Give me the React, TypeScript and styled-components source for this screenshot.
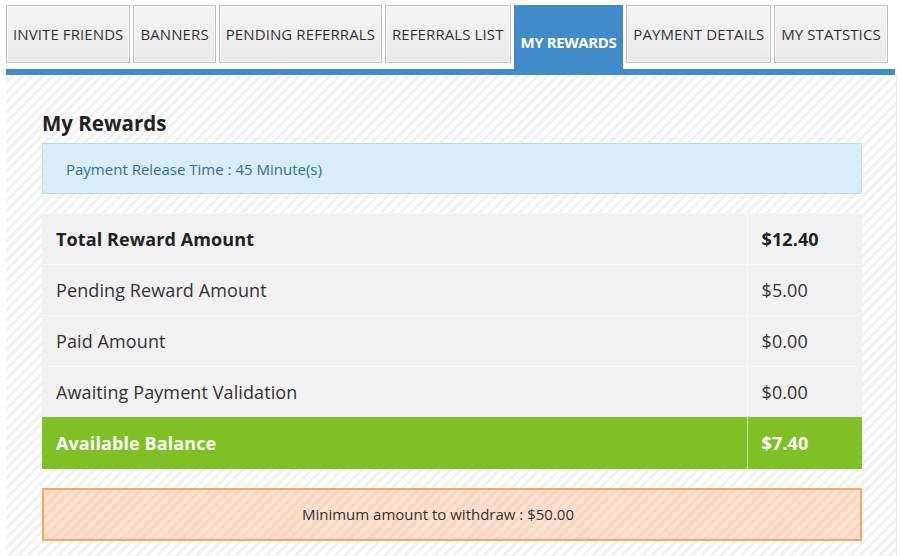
import * as React from 'react';
import styled, { createGlobalStyle } from 'styled-components';

const GlobalStyle = createGlobalStyle`
    body {
        margin: 0;
        background: #ffffff;
        font-family: "Open Sans", "Liberation Sans", sans-serif;
        color: #333333;
    }
`;

const Page = styled.div`
    width: 902px;
    height: 556px;
    padding: 5px 0 0 6px;
    box-sizing: border-box;
    overflow: hidden;
`;

const TabBar = styled.div`
    display: flex;
    align-items: flex-start;
    gap: 3px;
    height: 64px;
`;

const Tab = styled.div<{ $active?: boolean }>`
    box-sizing: border-box;
    height: ${p => (p.$active ? '64px' : '58px')};
    padding: ${p => (p.$active ? '27px 6px 0' : '0 6px')};
    display: flex;
    align-items: ${p => (p.$active ? 'flex-start' : 'center')};
    font-size: 15px;
    line-height: 19px;
    font-weight: ${p => (p.$active ? 700 : 400)};
    letter-spacing: ${p => (p.$active ? '-0.4px' : '0.1px')};
    text-transform: uppercase;
    white-space: nowrap;
    color: ${p => (p.$active ? '#ffffff' : '#333333')};
    background: ${p => (p.$active ? '#428bca' : 'linear-gradient(#f4f4f4, #e9e9e9)')};
    border: 1px solid ${p => (p.$active ? '#428bca' : '#bdbdbd')};
    box-shadow: ${p => (p.$active ? 'none' : 'inset 0 0 0 1px #fafafa')};
`;

const BlueBar = styled.div`
    height: 6px;
    background: #428bca;
    margin-right: 7px;
`;

const Panel = styled.div`
    height: 481px;
    margin-right: 5px;
    padding: 34px 34px 0 36px;
    box-sizing: border-box;
    border-right: 1px solid #e4e4e4;
    background: repeating-linear-gradient(
        135deg,
        #ffffff 0px,
        #ffffff 4px,
        #f2f2f2 4px,
        #f2f2f2 7px
    );
`;

const Title = styled.h3`
    margin: 0 0 6px;
    font-size: 20.5px;
    font-weight: 700;
    color: #222222;
    line-height: 28px;
`;

const InfoBox = styled.div`
    height: 51px;
    box-sizing: border-box;
    display: flex;
    align-items: center;
    padding: 0 23px;
    background: #d9edf7;
    border: 1px solid #b4dcef;
    color: #31708f;
    font-size: 15px;
`;

const Table = styled.table`
    width: 100%;
    margin-top: 19px;
    border-collapse: collapse;
    font-size: 18px;
    letter-spacing: 0.1px;
`;

const Row = styled.tr<{ $highlight?: boolean }>`
    height: 51px;
    background: ${p => (p.$highlight ? '#7fc125' : '#f1f1f1')};
    color: ${p => (p.$highlight ? '#ffffff' : '#333333')};
    font-weight: ${p => (p.$highlight ? 700 : 400)};
    border-top: 1px solid ${p => (p.$highlight ? '#7fc125' : '#f7f7f7')};
`;

const LabelCell = styled.td<{ $bold?: boolean }>`
    padding: 0 14px;
    font-weight: ${p => (p.$bold ? 700 : 'inherit')};
    color: ${p => (p.$bold ? '#222222' : 'inherit')};
`;

const ValueCell = styled.td<{ $bold?: boolean }>`
    width: 115px;
    padding: 0 14px;
    box-sizing: border-box;
    border-left: 1px solid rgba(255, 255, 255, 0.6);
    font-weight: ${p => (p.$bold ? 700 : 'inherit')};
    color: ${p => (p.$bold ? '#222222' : 'inherit')};
`;

const WarningBox = styled.div`
    margin-top: 19px;
    height: 53px;
    box-sizing: border-box;
    display: flex;
    align-items: center;
    justify-content: center;
    padding-right: 28px;
    border: 2px solid #f9a468;
    color: #333333;
    font-size: 15px;
    background: repeating-linear-gradient(
        135deg,
        #fde1cf 0px,
        #fde1cf 4px,
        #f8d8c4 4px,
        #f8d8c4 7px
    );
`;

const tabs = [
    'Invite Friends',
    'Banners',
    'Pending Referrals',
    'Referrals List',
    'My Rewards',
    'Payment Details',
    'My Statstics',
];

const rows = [
    { label: 'Total Reward Amount', value: '$12.40', bold: true },
    { label: 'Pending Reward Amount', value: '$5.00' },
    { label: 'Paid Amount', value: '$0.00' },
    { label: 'Awaiting Payment Validation', value: '$0.00' },
];

export default function App() {
    return (
        <Page>
            <GlobalStyle />
            <TabBar>
                {tabs.map(t => (
                    <Tab key={t} $active={t === 'My Rewards'}>{t}</Tab>
                ))}
            </TabBar>
            <BlueBar />
            <Panel>
                <Title>My Rewards</Title>
                <InfoBox>Payment Release Time : 45 Minute(s)</InfoBox>
                <Table>
                    <tbody>
                        {rows.map(r => (
                            <Row key={r.label}>
                                <LabelCell $bold={r.bold}>{r.label}</LabelCell>
                                <ValueCell $bold={r.bold}>{r.value}</ValueCell>
                            </Row>
                        ))}
                        <Row $highlight>
                            <LabelCell>Available Balance</LabelCell>
                            <ValueCell>$7.40</ValueCell>
                        </Row>
                    </tbody>
                </Table>
                <WarningBox>Minimum amount to withdraw : $50.00</WarningBox>
            </Panel>
        </Page>
    );
}
